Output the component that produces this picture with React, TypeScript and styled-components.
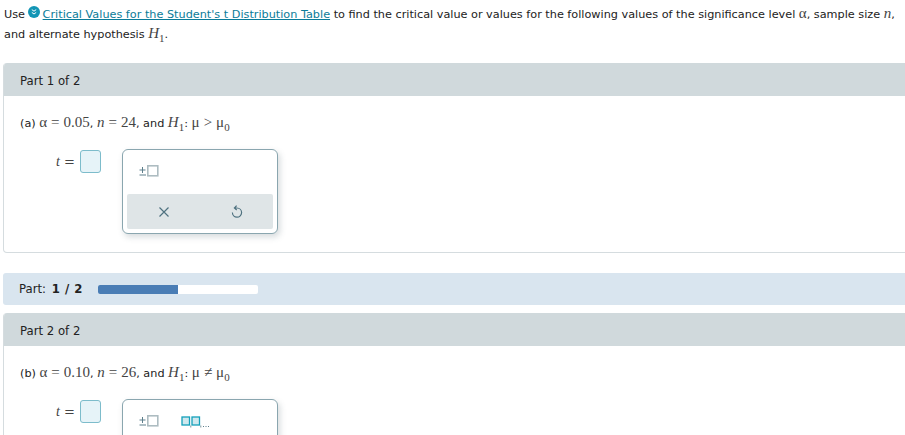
import React from "react";
import styled, { createGlobalStyle } from "styled-components";

const Global = createGlobalStyle`
  html, body { margin: 0; padding: 0; background: #fff; overflow: hidden; width: 905px; height: 435px; }
  body { font-family: "DejaVu Sans", Verdana, sans-serif; font-size: 11.25px; color: #222; }
`;

const Page = styled.div`
  width: 905px;
  height: 435px;
  overflow: hidden;
`;

const Intro = styled.p`
  margin: 0;
  padding: 5px 0 0 4px;
  width: 905px;
  height: 63px;
  box-sizing: border-box;
  line-height: 20px;
  white-space: nowrap;
`;

const LinkIcon = styled.svg`
  width: 12px;
  height: 12px;
  vertical-align: 0;
  margin: 0 3px 0 -1px;
`;

const TableLink = styled.a`
  color: #0a7c99;
  text-decoration: underline;
`;

const M = styled.span`
  font-family: "Liberation Serif", "Times New Roman", serif;
  font-size: 15px;
  line-height: 1;
  color: #444;
`;

const V = styled(M)`
  font-style: italic;
  font-size: 15px;
`;

const Op = styled(M)`
  margin: 0 4px;
`;

const Sub = styled.sub`
  font-family: "Liberation Serif", "Times New Roman", serif;
  font-size: 11px;
  line-height: 0;
  color: #444;
  vertical-align: -4px;
`;

const Card = styled.section<{ $height: number }>`
  margin-left: 3px;
  width: 920px;
  height: ${(p) => p.$height}px;
  box-sizing: border-box;
  border: 1px solid #d5dcdf;
  border-top: none;
  border-radius: 4px;
  overflow: hidden;
`;

const CardHead = styled.div`
  height: 33px;
  background: #d0d9dc;
  display: flex;
  align-items: center;
  padding: 2px 0 0 16px;
  box-sizing: border-box;
  font-size: 11.7px;
  color: #222;
`;

const CardBody = styled.div`
  padding: 0 16px;
`;

const Question = styled.div`
  height: 53px;
  padding-top: 18px;
  box-sizing: border-box;
  line-height: 20px;
  white-space: nowrap;
`;

const AnswerRow = styled.div`
  display: flex;
  align-items: flex-start;
`;

const Label = styled.div`
  width: 60px;
  box-sizing: border-box;
  padding: 5px 5px 0 0;
  text-align: right;
  font-size: 13px;
  line-height: 16px;
  color: #444;
  white-space: nowrap;
`;

const TVar = styled.i`
  font-family: "Liberation Serif", serif;
  font-size: 14px;
  color: #444;
`;

const Field = styled.div`
  width: 21px;
  height: 23px;
  box-sizing: border-box;
  margin-top: 1px;
  background: #e6f3f8;
  border: 1px solid #7dbccb;
  border-radius: 3px;
`;

const Palette = styled.div`
  margin-left: 21px;
  width: 156px;
  height: 85px;
  box-sizing: border-box;
  background: #fff;
  border: 1px solid #8aa6af;
  border-radius: 6px;
  box-shadow: 2px 3px 6px rgba(70, 90, 100, 0.22);
  padding: 0 4px;
  flex-shrink: 0;
`;

const Symbols = styled.div`
  height: 44px;
  display: flex;
  align-items: flex-start;
  padding: 14px 0 0 11px;
  box-sizing: border-box;
  gap: 22px;
`;

const Tools = styled.div`
  height: 35px;
  background: #dfe5e7;
  border-radius: 2px;
  display: flex;
  align-items: center;
  justify-content: space-around;
`;

const SymbolIcon = styled.svg`
  display: block;
`;

const ToolIcon = styled.svg`
  display: block;
  width: 14px;
  height: 14px;
`;

const Band = styled.div`
  margin: 20px 0 8px 3px;
  width: 920px;
  height: 32px;
  background: #d9e5ef;
  border-radius: 3px;
  display: flex;
  align-items: center;
  padding-left: 16px;
  box-sizing: border-box;
`;

const BandLabel = styled.span`
  width: 79px;
  white-space: nowrap;
  font-size: 11.7px;
  color: #222;
`;

const Bold = styled.b`
  font-weight: 700;
  word-spacing: 1px;
  margin-left: 2px;
`;

const Track = styled.div`
  width: 160px;
  height: 9px;
  background: #fff;
  border-radius: 2px;
  overflow: hidden;
`;

const Fill = styled.div`
  height: 100%;
  background: #4a7db5;
`;

const PlusMinus = () => (
  <SymbolIcon width="21" height="14" viewBox="0 0 21 14">
    <path d="M4.5 3v6M1.5 6h6M1.5 11h6.5" stroke="#5d7f8c" strokeWidth="1" fill="none" />
    <rect x="9.8" y="1.8" width="10" height="10" fill="none" stroke="#adbcc1" strokeWidth="1.6" />
  </SymbolIcon>
);

const Interval = () => (
  <SymbolIcon width="30" height="14" viewBox="0 0 30 14">
    <rect x="1" y="3" width="7.5" height="8" fill="#cfe8ee" stroke="#14a0ba" strokeWidth="1.3" />
    <rect x="11" y="3" width="7.5" height="8" fill="#cfe8ee" stroke="#14a0ba" strokeWidth="1.3" />
    <path d="M9.8 11.5v2M19.8 11.5v2" stroke="#7d939c" strokeWidth="1" />
    <path d="M22 12.5h1M24.5 12.5h1M27 12.5h1" stroke="#5d7f8c" strokeWidth="1" />
  </SymbolIcon>
);

const Answer = ({ interval }: { interval?: boolean }) => (
  <AnswerRow>
    <Label>
      <TVar>t</TVar> =
    </Label>
    <Field />
    <Palette>
      <Symbols>
        <PlusMinus />
        {interval && <Interval />}
      </Symbols>
      <Tools>
        <ToolIcon viewBox="0 0 14 14">
          <path d="M2.5 2.5l9 9M11.5 2.5l-9 9" stroke="#4f7280" strokeWidth="1.2" fill="none" />
        </ToolIcon>
        <ToolIcon viewBox="0 0 14 14">
          <path
            d="M5 3h2a4.6 4.6 0 1 1-4.6 4.6M6.6 0.6L4.4 3l2.3 2"
            stroke="#4f7280"
            strokeWidth="1.2"
            fill="none"
          />
        </ToolIcon>
      </Tools>
    </Palette>
  </AnswerRow>
);

export default function App() {
  return (
    <Page>
      <Global />
      <Intro>
        Use{" "}
        <LinkIcon viewBox="0 0 12 12">
          <circle cx="6" cy="6" r="6" fill="#1295b5" />
          <path d="M3.8 3.6L6 5.2l2.2-1.6M3.8 6.4L6 8l2.2-1.6" stroke="#fff" strokeWidth="1" fill="none" />
        </LinkIcon>
        <TableLink>Critical Values for the Student's t Distribution Table</TableLink> to find the critical value
        or values for the following values of the significance level <M>α</M>, sample size <V>n</V>,
        <br />
        and alternate hypothesis <V>H</V>
        <Sub>1</Sub>.
      </Intro>
      <Card $height={190}>
        <CardHead>Part 1 of 2</CardHead>
        <CardBody>
          <Question>
            (a) <M>α</M>
            <Op>=</Op>
            <M>0.05</M>, <V>n</V>
            <Op>=</Op>
            <M>24</M>, and <V>H</V>
            <Sub>1</Sub>: <M>μ</M>
            <Op>&gt;</Op>
            <M>μ</M>
            <Sub>0</Sub>
          </Question>
          <Answer />
        </CardBody>
      </Card>
      <Band>
        <BandLabel>
          Part: <Bold>1 / 2</Bold>
        </BandLabel>
        <Track>
          <Fill style={{ width: "50%" }} />
        </Track>
      </Band>
      <Card $height={189}>
        <CardHead>Part 2 of 2</CardHead>
        <CardBody>
          <Question>
            (b) <M>α</M>
            <Op>=</Op>
            <M>0.10</M>, <V>n</V>
            <Op>=</Op>
            <M>26</M>, and <V>H</V>
            <Sub>1</Sub>: <M>μ</M>
            <Op>≠</Op>
            <M>μ</M>
            <Sub>0</Sub>
          </Question>
          <Answer interval />
        </CardBody>
      </Card>
    </Page>
  );
}
